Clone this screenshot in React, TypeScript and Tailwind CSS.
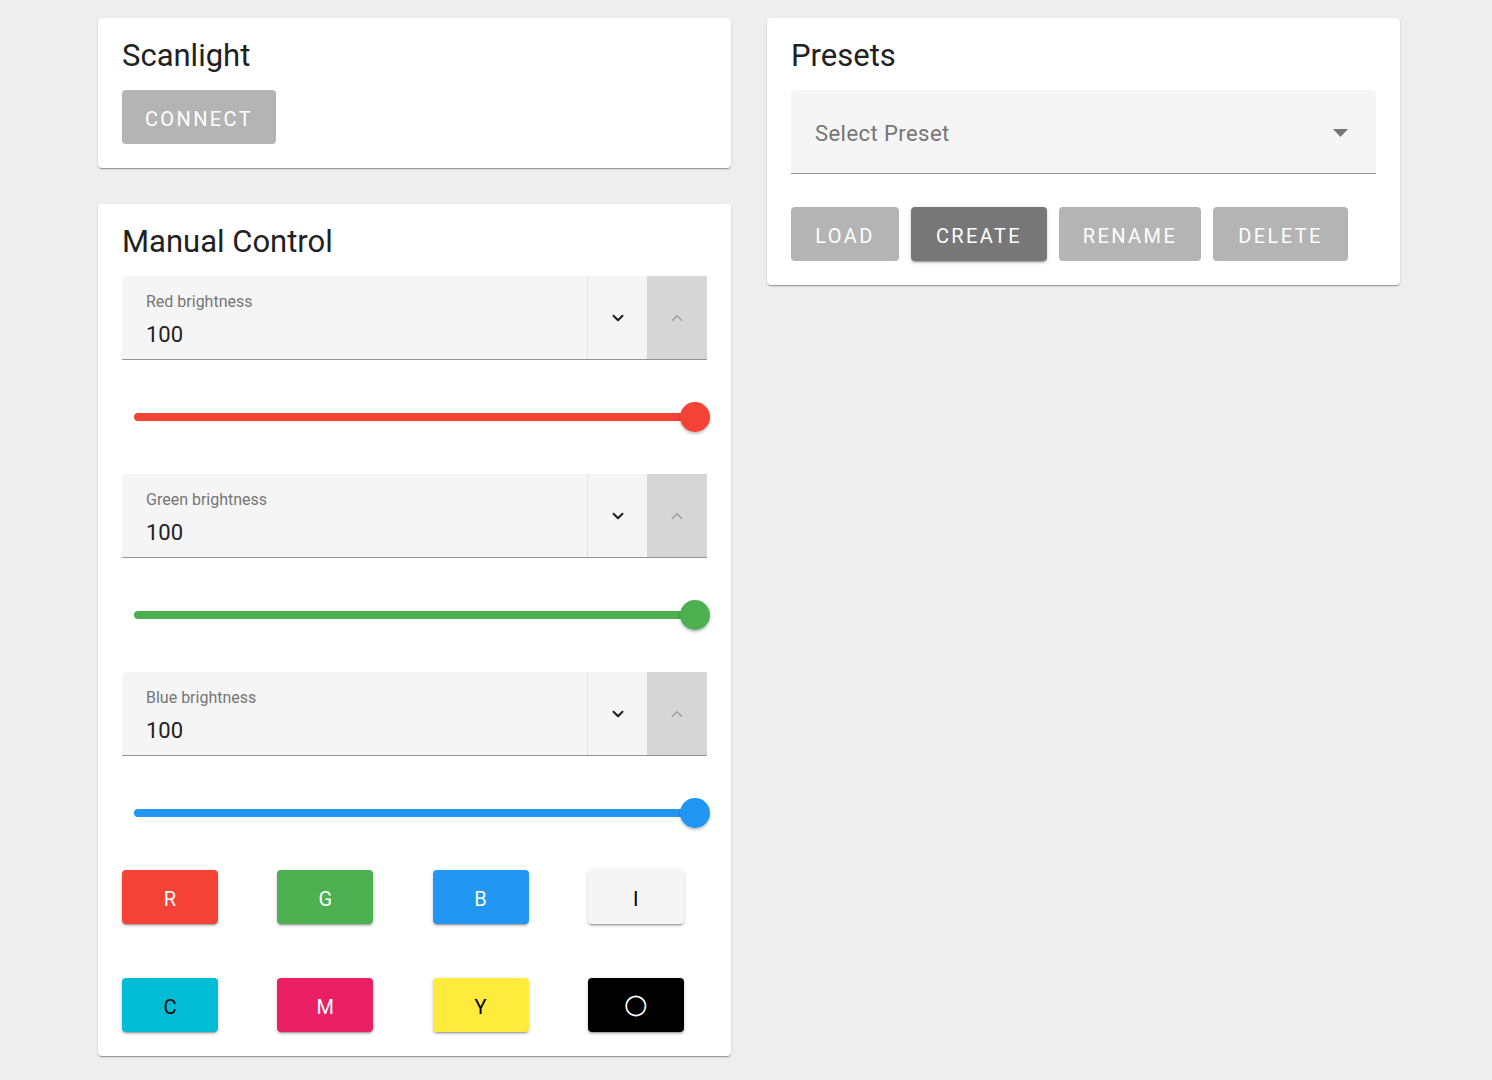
import { ChevronDown, ChevronUp } from 'lucide-react';

const font = { fontFamily: 'Roboto, "Liberation Sans", sans-serif' };

const cardCls =
    'bg-white rounded-[4px] p-6 shadow-[0_2px_1px_-1px_rgba(0,0,0,0.2),0_1px_1px_0_rgba(0,0,0,0.14),0_1px_3px_0_rgba(0,0,0,0.12)]';

const raised =
    'shadow-[0_3px_1px_-2px_rgba(0,0,0,0.2),0_2px_2px_0_rgba(0,0,0,0.14),0_1px_5px_0_rgba(0,0,0,0.12)]';

const CardTitle = ({ children }: { children: string }) => (
    <h2 className="text-[31px] leading-[28px] mb-[20px] text-[#212121] font-normal">{children}</h2>
);

const sliders = [
    { label: 'Red brightness', color: 'bg-[#f44336]' },
    { label: 'Green brightness', color: 'bg-[#4caf50]' },
    { label: 'Blue brightness', color: 'bg-[#2196f3]' },
];

const colorButtons = [
    { key: 'R', cls: 'bg-[#f44336] text-white' },
    { key: 'G', cls: 'bg-[#4caf50] text-white' },
    { key: 'B', cls: 'bg-[#2196f3] text-white' },
    { key: 'I', cls: 'bg-[#f5f5f5] text-black' },
    { key: 'C', cls: 'bg-[#00bcd4] text-black' },
    { key: 'M', cls: 'bg-[#e91e63] text-white' },
    { key: 'Y', cls: 'bg-[#ffeb3b] text-black' },
];

const NumberField = ({ label }: { label: string }) => (
    <div className="flex h-[84px] bg-[#f5f5f5] border-b border-[#949494] rounded-t-[4px]">
        <div className="flex-1 flex flex-col pl-6 pt-[16px]">
            <span className="text-[16px] leading-[20px] text-[#757575]">{label}</span>
            <span className="text-[22px] leading-[28px] mt-[9px] text-[#212121]">100</span>
        </div>
        <div className="w-[60px] flex items-center justify-center border-l border-[#e4e4e4]">
            <ChevronDown size={18} strokeWidth={2.75} className="text-[#212121]" />
        </div>
        <div className="w-[60px] flex items-center justify-center bg-[#d6d6d6]">
            <ChevronUp size={18} strokeWidth={2.25} className="text-[#a0a0a0]" />
        </div>
    </div>
);

const Slider = ({ color }: { color: string }) => (
    <div className="h-[114px] flex items-center px-3">
        <div className={`relative w-full h-2 rounded-full ${color}`}>
            <div
                className={`absolute right-[-15px] top-1/2 -translate-y-1/2 w-[30px] h-[30px] rounded-full ${color} shadow-[0_2px_3px_rgba(0,0,0,0.25)]`}
            />
        </div>
    </div>
);

const GreyButton = ({ label, w, dark }: { label: string; w: string; dark?: boolean }) => (
    <button
        className={`${w} h-[54px] pt-[4px] rounded-[4px] text-white text-[20px] font-normal tracking-[0.12em] ${
            dark ? `bg-[#777777] ${raised}` : 'bg-[#b4b4b4]'
        }`}
    >
        {label}
    </button>
);

const App = () => (
    <div className="min-h-screen bg-[#eeeeee] pt-[18px] pb-6" style={font}>
        <div className="ml-[98px] w-[1302px] grid grid-cols-2 gap-9 items-start">
            <div className="flex flex-col gap-9">
                <div className={cardCls}>
                    <CardTitle>Scanlight</CardTitle>
                    <GreyButton label="CONNECT" w="w-[154px]" />
                </div>

                <div className={cardCls}>
                    <CardTitle>Manual Control</CardTitle>
                    {sliders.map((s) => (
                        <div key={s.label}>
                            <NumberField label={s.label} />
                            <Slider color={s.color} />
                        </div>
                    ))}
                    <div className="grid grid-cols-4 gap-y-[54px] w-[562px] gap-x-[59px]">
                        {colorButtons.map((b) => (
                            <button
                                key={b.key}
                                className={`w-[96px] h-[54px] pt-[3px] rounded-[4px] text-[20px] font-normal ${b.cls} ${raised}`}
                            >
                                {b.key}
                            </button>
                        ))}
                        <button
                            className={`w-[96px] h-[54px] pb-[3px] rounded-[4px] bg-black text-white flex items-center justify-center ${raised}`}
                        >
                            <span className="text-[27px] leading-none" style={{ fontFamily: '"DejaVu Sans", sans-serif' }}>
                                ○
                            </span>
                        </button>
                    </div>
                </div>
            </div>

            <div className={cardCls}>
                <CardTitle>Presets</CardTitle>
                <div className="flex items-center h-[84px] bg-[#f5f5f5] border-b border-[#949494] rounded-t-[4px] pl-6 pr-7">
                    <span className="flex-1 pt-[4px] text-[22px] text-[#757575] tracking-[0.02em]">Select Preset</span>
                    <svg width="15" height="8" viewBox="0 0 15 8" className="text-[#757575] mt-[2px]">
                        <path d="M0 0h15L7.5 8z" fill="currentColor" />
                    </svg>
                </div>
                <div className="flex gap-3 mt-[33px]">
                    <GreyButton label="LOAD" w="w-[108px]" />
                    <GreyButton label="CREATE" w="w-[136px]" dark />
                    <GreyButton label="RENAME" w="w-[142px]" />
                    <GreyButton label="DELETE" w="w-[135px]" />
                </div>
            </div>
        </div>
    </div>
);

export default App;
